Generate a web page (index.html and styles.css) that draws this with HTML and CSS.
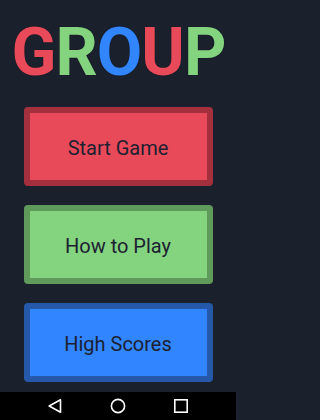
FILE: index.html
```html
<!DOCTYPE html>
<html>
<head>
<meta charset="utf-8">
<link rel="stylesheet" href="styles.css">
</head>
<body>
<div class="screen">
  <main class="main">
    <h1 class="title"><span class="red">G</span><span class="green">R</span><span class="blue">O</span><span class="red">U</span><span class="green">P</span></h1>
    <div class="menu">
      <div class="btn btn-red">Start Game</div>
      <div class="btn btn-green">How to Play</div>
      <div class="btn btn-blue">High Scores</div>
    </div>
  </main>
  <nav class="navbar">
    <svg class="nav-icon" width="16" height="16" viewBox="0 0 16 16"><path d="M13.5 1.8 L2.2 8 L13.5 14.2 Z" fill="none" stroke="#fff" stroke-width="1.6" stroke-linejoin="round"/></svg>
    <svg class="nav-icon" width="16" height="16" viewBox="0 0 16 16"><circle cx="8" cy="8" r="6.6" fill="none" stroke="#fff" stroke-width="1.6"/></svg>
    <svg class="nav-icon" width="16" height="16" viewBox="0 0 16 16"><rect x="1.8" y="1.8" width="12.4" height="12.4" fill="none" stroke="#fff" stroke-width="1.6"/></svg>
  </nav>
</div>
</body>
</html>
```
FILE: styles.css
```css
html, body {
  margin: 0;
  padding: 0;
}
body {
  background: #1b202d;
  font-family: Roboto, "Liberation Sans", sans-serif;
}
.screen {
  width: 236px;
  height: 420px;
  display: flex;
  flex-direction: column;
}
.main {
  height: 392px;
  display: flex;
  flex-direction: column;
  align-items: center;
}
.title {
  margin: 19.5px 0 0 0;
  padding-left: 1px;
  font-size: 66px;
  line-height: 66px;
  font-weight: 700;
  letter-spacing: -1px;
  text-shadow: 0 0 1px #0d1018;
}
.red { color: #e84a5a; }
.green { color: #83d37f; }
.blue { color: #3186ff; }
.menu {
  margin-top: 21.5px;
  display: flex;
  flex-direction: column;
  gap: 19px;
}
.btn {
  width: 189px;
  height: 79px;
  box-sizing: border-box;
  border: 6px solid;
  border-radius: 4px;
  display: flex;
  align-items: center;
  justify-content: center;
  padding-top: 3px;
  font-size: 20px;
  color: #1c2130;
}
.btn-red {
  background: #e84a5a;
  border-color: #a3303c;
}
.btn-green {
  background: #83d37f;
  border-color: #5f9a5b;
}
.btn-blue {
  background: #3186ff;
  border-color: #2558a8;
}
.navbar {
  height: 28px;
  background: #000;
  display: flex;
  align-items: center;
  justify-content: space-between;
  padding: 0 47px 0 47px;
}
.nav-icon {
  display: block;
}
```
